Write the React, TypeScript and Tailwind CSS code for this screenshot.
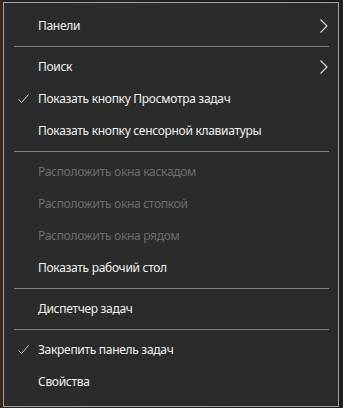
import React from "react";

type Item =
  | { kind: "item"; label: string; checked?: boolean; disabled?: boolean; submenu?: boolean }
  | { kind: "sep" };

const items: Item[] = [
  { kind: "item", label: "Панели", submenu: true },
  { kind: "sep" },
  { kind: "item", label: "Поиск", submenu: true },
  { kind: "item", label: "Показать кнопку Просмотра задач", checked: true },
  { kind: "item", label: "Показать кнопку сенсорной клавиатуры" },
  { kind: "sep" },
  { kind: "item", label: "Расположить окна каскадом", disabled: true },
  { kind: "item", label: "Расположить окна стопкой", disabled: true },
  { kind: "item", label: "Расположить окна рядом", disabled: true },
  { kind: "item", label: "Показать рабочий стол" },
  { kind: "sep" },
  { kind: "item", label: "Диспетчер задач" },
  { kind: "sep" },
  { kind: "item", label: "Закрепить панель задач", checked: true },
  { kind: "item", label: "Свойства" },
];

const Check = () => (
  <svg width="14" height="12" viewBox="0 0 14 12" className="block">
    <path d="M1.5 6.5 L4.5 9.5 L11.5 1.5" fill="none" stroke="#d8d8d8" strokeWidth="1" />
  </svg>
);

const Chevron = () => (
  <svg width="10" height="16" viewBox="0 0 10 16" className="block">
    <path d="M1.5 1.5 L8 8 L1.5 14.5" fill="none" stroke="#e0e0e0" strokeWidth="1.1" />
  </svg>
);

export default function App() {
  return (
    <div className="w-[343px] h-[408px] overflow-hidden bg-[linear-gradient(90deg,#3a2a20_0px,#2e2520_3px,#1c1a19_339px,#2a2019_343px)] pl-[3px] pt-[2px] font-['Noto_Sans','Open_Sans',sans-serif]">
      <div className="w-[336px] h-[405px] border border-[#a3a3a3] bg-[#2b2b2b] pt-[7px] pb-[7px] flex flex-col">
        {items.map((it, i) =>
          it.kind === "sep" ? (
            <div key={i} className="h-[9px] flex items-center pl-[10px] pr-[9px]">
              <div className="h-px w-full bg-[#7f7f7f]" />
            </div>
          ) : (
            <div key={i} className="h-[32px] flex items-center relative">
              <div className="w-[34px] flex justify-end pr-[7px]">
                {it.checked && <Check />}
              </div>
              <span
                className={`text-[12px] leading-none tracking-[-0.3px] ${
                  it.disabled ? "text-[#6b6b6b]" : "text-[#f2f2f2]"
                }`}
              >
                {it.label}
              </span>
              {it.submenu && (
                <div className="absolute right-[9px] top-[8px]">
                  <Chevron />
                </div>
              )}
            </div>
          )
        )}
      </div>
    </div>
  );
}
